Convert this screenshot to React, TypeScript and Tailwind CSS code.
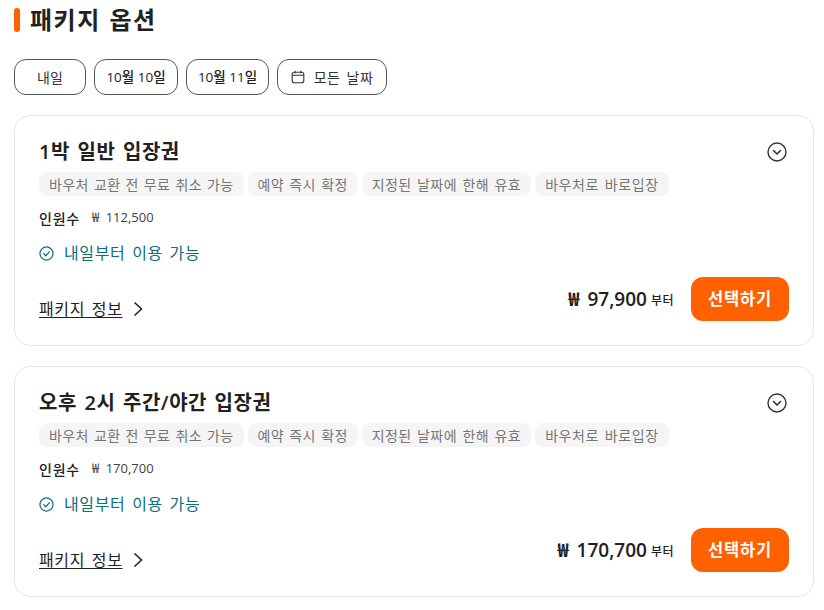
import React from "react";

const font = { fontFamily: '"Open Sans", "Noto Sans CJK KR", sans-serif' };

const tags = [
  { text: "바우처 교환 전 무료 취소 가능", cls: "tracking-[0.4px] [word-spacing:1px]" },
  { text: "예약 즉시 확정", cls: "tracking-[0.4px] [word-spacing:1.2px]" },
  { text: "지정된 날짜에 한해 유효", cls: "tracking-[0.4px] [word-spacing:1.5px]" },
  { text: "바우처로 바로입장", cls: "tracking-[0.6px] [word-spacing:1.5px]" },
];

function Card({ title, orig, price }: { title: string; orig: string; price: string }) {
  return (
    <div className="relative h-[231px] rounded-[16px] border border-[#e6e6e6] bg-white pl-6 pr-6 pt-[22px]">
      <div className="flex h-[28px] items-center justify-between">
        <h3 className="text-[20px] font-semibold leading-[28px] tracking-[0.025em] text-[#212121] [word-spacing:0.1em]">{title}</h3>
        <svg width="20" height="20" viewBox="0 0 20 20" fill="none" stroke="#333" strokeWidth="1.4" className="mr-[2px]">
          <circle cx="10" cy="10" r="9" />
          <path d="M6.5 8.5 10 12l3.5-3.5" strokeWidth="1.6" strokeLinecap="round" strokeLinejoin="round" />
        </svg>
      </div>
      <div className="mt-[6px] flex gap-1">
        {tags.map((t) => (
          <span key={t.text} className={`flex h-6 items-center whitespace-nowrap rounded-[8px] bg-[#f5f5f5] px-[10px] text-[14px] text-[#757575] ${t.cls}`}>{t.text}</span>
        ))}
      </div>
      <div className="mt-[10px] flex h-[24px] items-center gap-3">
        <span className="text-[14px] font-medium tracking-[0.8px] text-[#212121]">인원수</span>
        <span className="text-[13px] text-[#424242] [word-spacing:1px]"><span className="tracking-[2px]">₩</span> {orig}</span>
      </div>
      <div className="mt-[11px] flex h-[24px] items-center gap-[10px] text-[#0b6e80]">
        <svg width="15" height="15" viewBox="0 0 16 16" fill="none" stroke="currentColor" strokeWidth="1.3">
          <circle cx="8" cy="8" r="7" />
          <path d="M5 8.2 7.2 10.4 11 6.2" strokeLinecap="round" strokeLinejoin="round" />
        </svg>
        <span className="text-[16px] tracking-[0.04em] [word-spacing:0.12em]">내일부터 이용 가능</span>
      </div>
      <div className="mt-[12px] flex items-center justify-between">
        <div className="mt-[20px] flex items-center gap-[10px]">
          <span className="text-[16px] leading-[22px] tracking-[0.04em] text-[#212121] underline underline-offset-2 [word-spacing:0.12em]">패키지 정보</span>
          <svg width="12" height="16" viewBox="0 0 12 16" fill="none" stroke="#222" strokeWidth="1.6" className="-ml-[1px]">
            <path d="M2.5 1.5 9.5 8l-7 6.5" />
          </svg>
        </div>
        <div className="flex items-center">
          <span className="text-[19px] font-semibold text-[#212121] [word-spacing:1px]"><span className="tracking-[2px]">₩</span> {price}</span>
          <span className="ml-[4px] mt-[3px] text-[12px] font-medium tracking-[0.5px] text-[#212121]">부터</span>
          <button className="ml-[17px] h-[44px] w-[98px] rounded-[12px] bg-[#ff6000] text-[16.5px] font-bold tracking-[0.05em] text-white">선택하기</button>
        </div>
      </div>
    </div>
  );
}

export default function App() {
  return (
    <div style={font} className="h-[610px] w-[824px] overflow-hidden bg-white pl-[14px] pr-[10px] pt-[8px]">
      <div className="flex h-[24px] items-center gap-[10px]">
        <span className="h-[24px] w-[6px] rounded-[3px] bg-[#ff6000]" />
        <h2 className="text-[24px] font-bold leading-[24px] tracking-[1.5px] text-[#212121] [word-spacing:1px]">패키지 옵션</h2>
      </div>
      <div className="mt-[27px] flex gap-2">
        <button className="h-[36px] w-[72px] rounded-[12px] border border-[#555] text-[14px] text-[#333]">내일</button>
        <button className="h-[36px] w-[84px] rounded-[12px] border border-[#555] text-[13.5px] font-medium text-[#212121]">10월 10일</button>
        <button className="h-[36px] w-[83px] rounded-[12px] border border-[#555] text-[13.5px] font-medium text-[#212121]">10월 11일</button>
        <button className="flex h-[36px] w-[110px] items-center justify-center gap-[9px] rounded-[12px] border border-[#555] text-[14px] tracking-[0.5px] text-[#333] [word-spacing:2px]">
          <svg width="14" height="14" viewBox="0 0 14 14" fill="none" stroke="#333" strokeWidth="1.1">
            <rect x="1.2" y="2.2" width="11.6" height="10.6" rx="2" />
            <path d="M1.2 5.2h11.6M4.2 .8v2.4M9.8 .8v2.4" />
          </svg>
          모든 날짜
        </button>
      </div>
      <div className="mt-[20px] flex flex-col gap-[20px]">
        <Card title="1박 일반 입장권" orig="112,500" price="97,900" />
        <Card title="오후 2시 주간/야간 입장권" orig="170,700" price="170,700" />
      </div>
    </div>
  );
}
